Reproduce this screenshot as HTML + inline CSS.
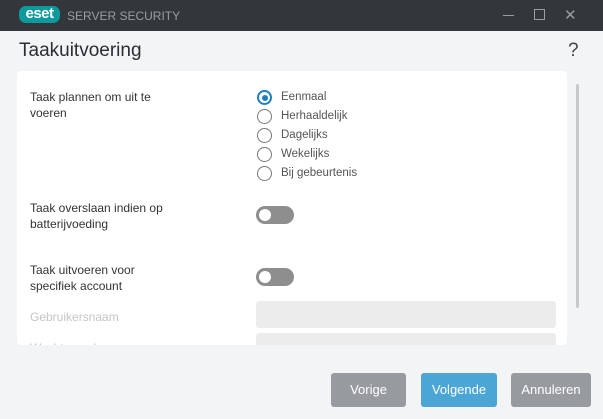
<!DOCTYPE html>
<html><head><style>
*{margin:0;padding:0;box-sizing:border-box}
body{width:603px;height:419px;overflow:hidden;background:#f3f4f6;font-family:"Liberation Sans",sans-serif;position:relative}
.tb{position:absolute;left:0;top:0;width:603px;height:31px;background:#33363b}
.logo{position:absolute;left:19px;top:6px;width:41px;height:17px;background:#0e9a9c;border-radius:7px;color:#fff;font-weight:bold;font-size:15px;line-height:16px;text-align:center;letter-spacing:-0.5px}
.tt{position:absolute;left:67px;top:9px;color:#9a9da2;font-size:12px}
h1{position:absolute;left:19px;top:40px;font-size:19px;font-weight:normal;color:#2a2d33}
.q{position:absolute;left:568px;top:40px;font-size:19px;color:#444}
.panel{position:absolute;left:17px;top:71px;width:550px;height:274px;background:#fff;border-radius:4px;overflow:hidden}
.lbl{position:absolute;font-size:12px;color:#333;line-height:16px}
.r{position:absolute;left:257px;width:15px;height:15px;border:1.5px solid #777;border-radius:50%}
.rl{position:absolute;left:281px;font-size:11.5px;color:#555}
.tg{position:absolute;left:256px;width:38px;height:18px;background:#8e8e8e;border-radius:9px}
.tg:after{content:"";position:absolute;left:3px;top:3px;width:12px;height:12px;border-radius:50%;background:#fff}
.in{position:absolute;left:239px;width:300px;height:27px;background:#ececec;border-radius:3px}
.btn{position:absolute;top:373px;height:34px;border-radius:3px;color:#fff;font-size:13px;text-align:center;line-height:34px}
</style></head><body>
<div class="tb">
<div class="logo">eset</div>
<div class="tt">SERVER SECURITY</div>
<div style="position:absolute;left:503px;top:15px;width:11px;height:1px;background:#9a9da2"></div>
<div style="position:absolute;left:534px;top:9px;width:11px;height:11px;border:1px solid #9a9da2"></div>
<div style="position:absolute;left:564px;top:6px;color:#9a9da2;font-size:15px">✕</div>
</div>
<h1>Taakuitvoering</h1>
<div class="q">?</div>
<div class="panel">
<div class="lbl" style="left:13px;top:18px">Taak plannen om uit te<br>voeren</div>
<div class="lbl" style="left:13px;top:129px">Taak overslaan indien op<br>batterijvoeding</div>
<div class="lbl" style="left:13px;top:191px">Taak uitvoeren voor<br>specifiek account</div>
<div class="lbl" style="left:13px;top:238px;color:#c4c4c4">Gebruikersnaam</div>
<div class="lbl" style="left:13px;top:269px;color:#c4c4c4">Wachtwoord</div>
<div class="in" style="top:230px"></div>
<div class="in" style="top:262px"></div>
</div>
<div class="r" style="top:90px;border-color:#1e7fbf;border-width:2px"><div style="position:absolute;left:2.5px;top:2.5px;width:6px;height:6px;border-radius:50%;background:#1e7fbf"></div></div>
<div class="rl" style="top:91px">Eenmaal</div>
<div class="r" style="top:109px"></div><div class="rl" style="top:110px">Herhaaldelijk</div>
<div class="r" style="top:128px"></div><div class="rl" style="top:129px">Dagelijks</div>
<div class="r" style="top:147px"></div><div class="rl" style="top:148px">Wekelijks</div>
<div class="r" style="top:166px"></div><div class="rl" style="top:167px">Bij gebeurtenis</div>
<div class="tg" style="top:206px"></div>
<div class="tg" style="top:268px"></div>
<div style="position:absolute;left:576px;top:84px;width:3px;height:224px;background:#c8c8c8;border-radius:2px"></div>
<div class="btn" style="left:331px;width:75px;background:#979ba0">Vorige</div>
<div class="btn" style="left:421px;width:76px;background:#4ba6d6">Volgende</div>
<div class="btn" style="left:511px;width:80px;background:#979ba0">Annuleren</div>
</body></html>
